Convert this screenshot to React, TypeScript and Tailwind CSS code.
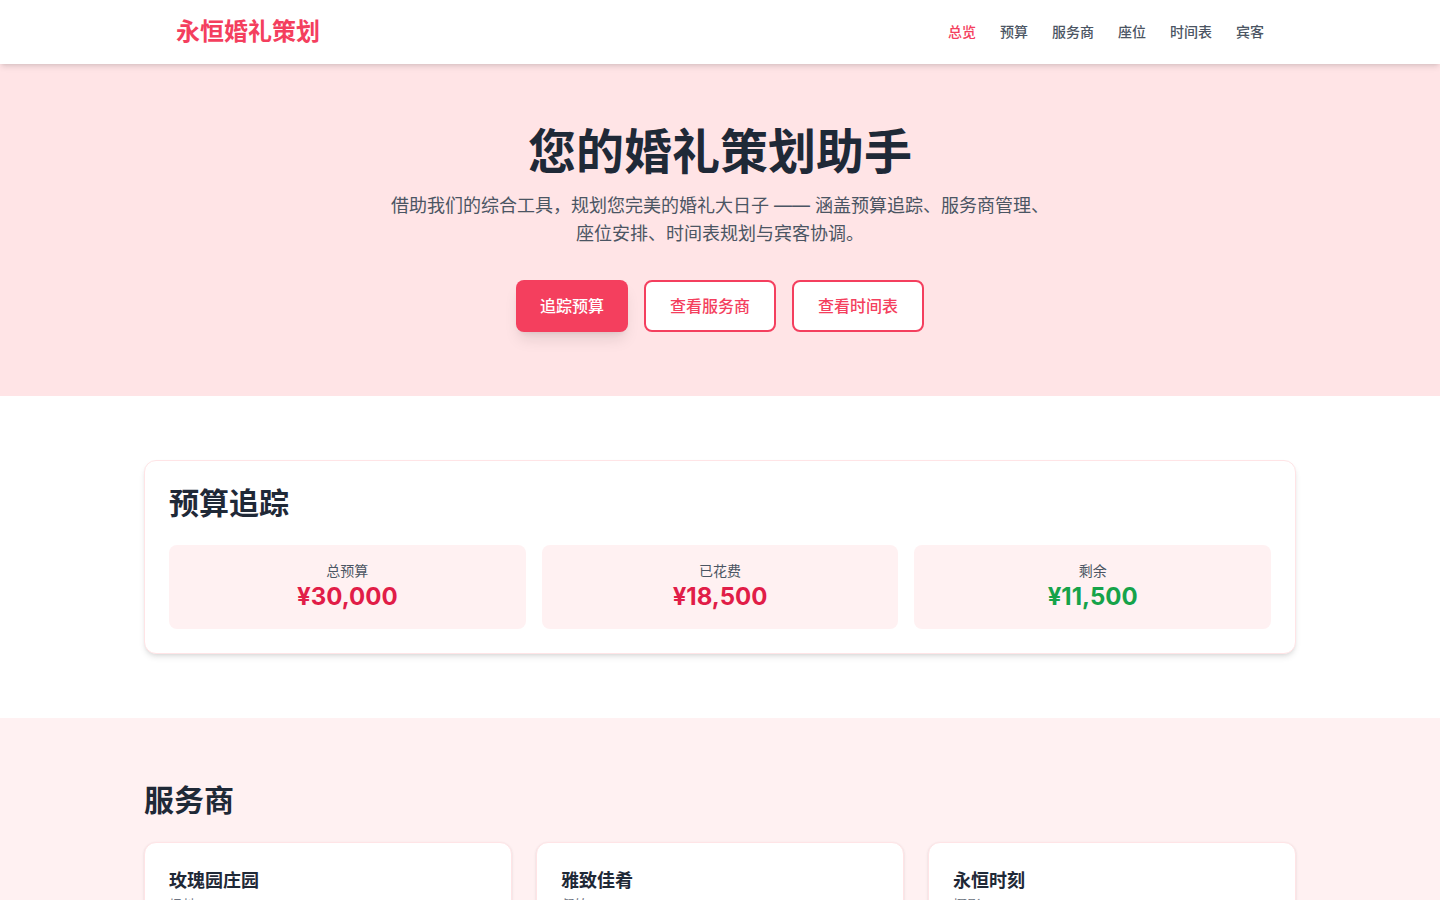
import { useState } from "react";

const navItems = ["总览", "预算", "服务商", "座位", "时间表", "宾客"];

const stats = [
  { label: "总预算", value: "¥30,000", color: "text-[#e11d48]" },
  { label: "已花费", value: "¥18,500", color: "text-[#e11d48]" },
  { label: "剩余", value: "¥11,500", color: "text-[#16a34a]" },
];

const vendors = [
  { name: "玫瑰园庄园", type: "场地", price: "¥12,000", status: "已预订" },
  { name: "雅致佳肴", type: "餐饮", price: "¥8,500", status: "已预订" },
  { name: "永恒时刻", type: "摄影", price: "¥4,200", status: "洽谈中" },
];

export default function App() {
  const [active, setActive] = useState("总览");

  return (
    <div className="min-h-screen bg-white text-[#1f2937] font-['Inter','Noto_Sans_CJK_SC',sans-serif]">
      <header className="sticky top-0 z-10 bg-white shadow-md">
        <div className="max-w-6xl mx-auto px-8 h-16 flex items-center justify-between">
          <span className="text-2xl font-bold text-[#f43f5e]">永恒婚礼策划</span>
          <nav className="flex gap-6">
            {navItems.map((item) => (
              <button
                key={item}
                onClick={() => setActive(item)}
                className={`text-sm font-medium transition-colors ${
                  active === item ? "text-[#f43f5e]" : "text-[#4b5563] hover:text-[#f43f5e]"
                }`}
              >
                {item}
              </button>
            ))}
          </nav>
        </div>
      </header>

      <section className="bg-[#ffe4e6] py-16 text-center">
        <h1 className="text-5xl leading-none font-bold text-[#1f2937] mb-4">您的婚礼策划助手</h1>
        <p className="max-w-2xl mx-auto text-lg text-[#4b5563] mb-8">
          借助我们的综合工具，规划您完美的婚礼大日子 —— 涵盖预算追踪、服务商管理、座位安排、时间表规划与宾客协调。
        </p>
        <div className="flex justify-center gap-4">
          <button className="px-6 py-3.5 rounded-lg bg-[#f43f5e] text-white font-medium shadow-lg hover:bg-[#e11d48] transition-colors">
            追踪预算
          </button>
          <button className="px-6 py-3 rounded-lg border-2 border-[#f43f5e] bg-white text-[#f43f5e] font-medium hover:bg-[#fff1f2] transition-colors">
            查看服务商
          </button>
          <button className="px-6 py-3 rounded-lg border-2 border-[#f43f5e] bg-white text-[#f43f5e] font-medium hover:bg-[#fff1f2] transition-colors">
            查看时间表
          </button>
        </div>
      </section>

      <section className="py-16">
        <div className="max-w-6xl mx-auto">
          <div className="bg-white rounded-xl border border-[#ffe4e6] shadow-md p-6">
            <h2 className="text-3xl font-bold text-[#1f2937] mb-6">预算追踪</h2>
            <div className="grid grid-cols-3 gap-4">
              {stats.map((s) => (
                <div key={s.label} className="bg-[#fff1f2] rounded-lg p-4 text-center">
                  <p className="text-sm text-[#4b5563]">{s.label}</p>
                  <p className={`text-2xl font-bold ${s.color}`}>{s.value}</p>
                </div>
              ))}
            </div>
          </div>
        </div>
      </section>

      <section className="bg-[#fff1f2] py-16">
        <div className="max-w-6xl mx-auto">
          <h2 className="text-3xl font-bold text-[#1f2937] mb-6">服务商</h2>
          <div className="grid grid-cols-3 gap-6">
            {vendors.map((v) => (
              <div key={v.name} className="bg-white rounded-xl border border-[#ffe4e6] shadow-sm p-6">
                <h3 className="text-lg font-semibold text-[#1f2937]">{v.name}</h3>
                <p className="text-sm text-[#6b7280] mb-4">{v.type}</p>
                <div className="flex items-center justify-between">
                  <span className="text-xl font-bold text-[#e11d48]">{v.price}</span>
                  <span className="text-xs px-2 py-1 rounded-full bg-[#dcfce7] text-[#15803d]">{v.status}</span>
                </div>
              </div>
            ))}
          </div>
        </div>
      </section>
    </div>
  );
}
